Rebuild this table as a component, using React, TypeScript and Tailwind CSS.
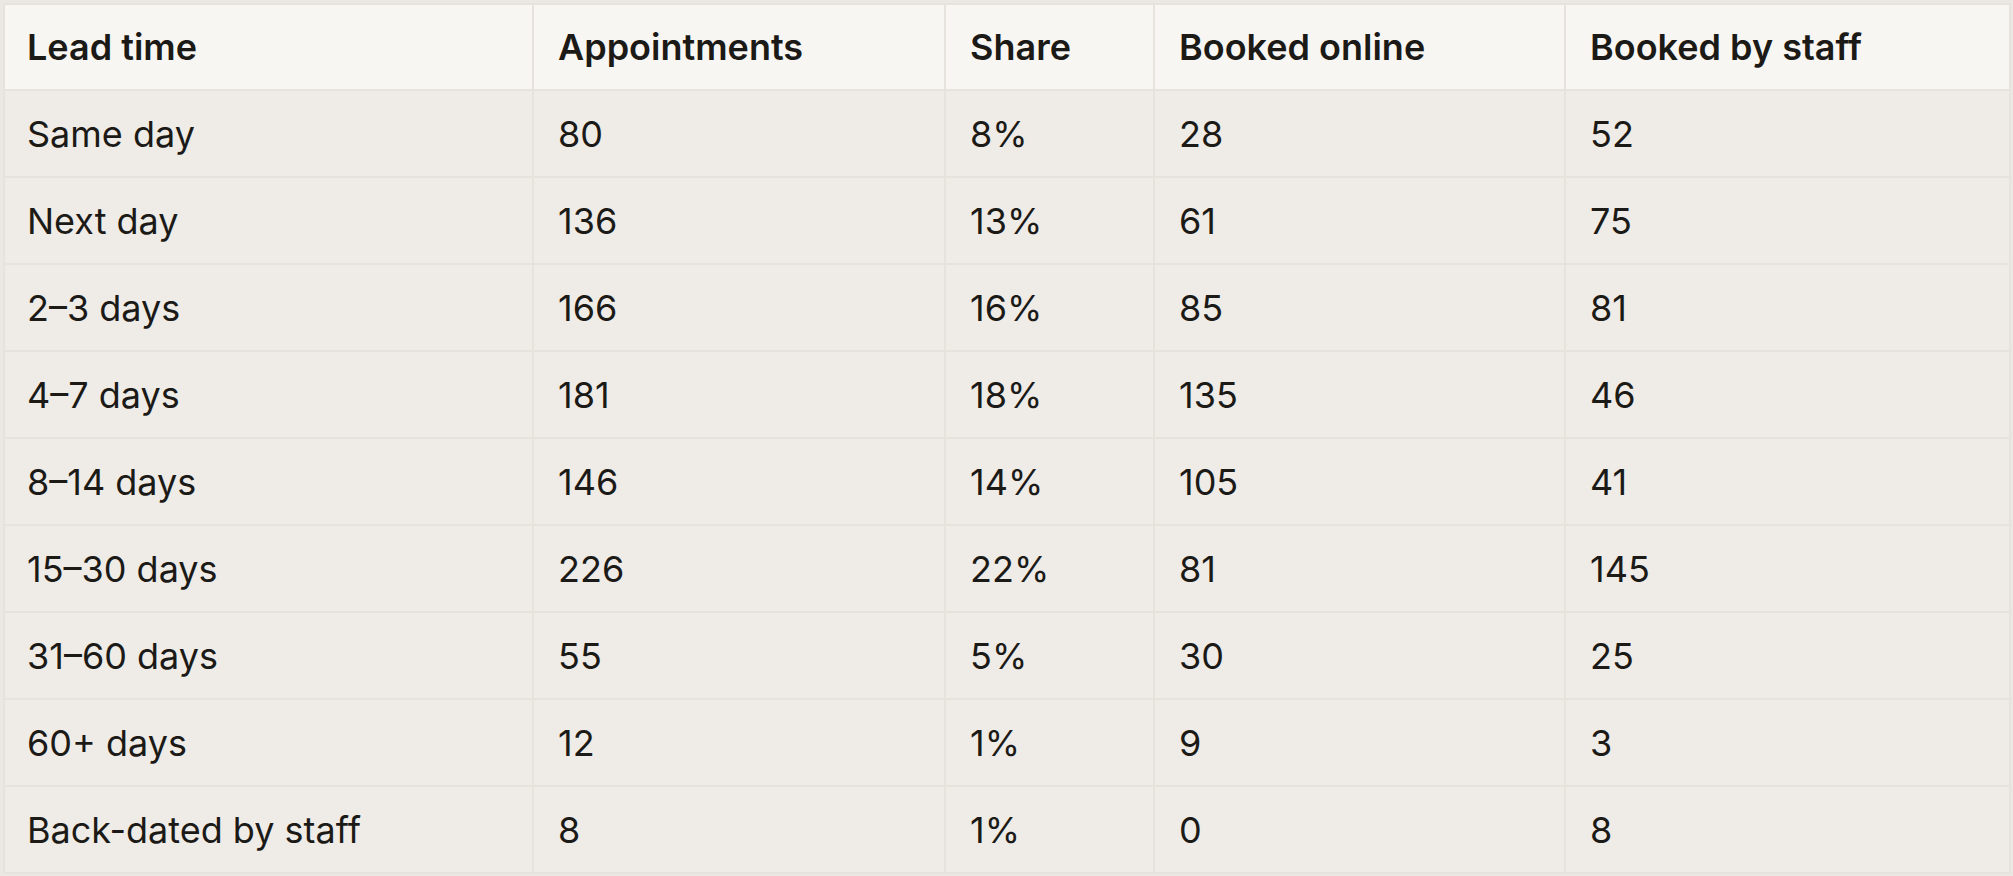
import React from 'react';

const rows: [string, string, string, string, string][] = [
  ['Same day', '80', '8%', '28', '52'],
  ['Next day', '136', '13%', '61', '75'],
  ['2–3 days', '166', '16%', '85', '81'],
  ['4–7 days', '181', '18%', '135', '46'],
  ['8–14 days', '146', '14%', '105', '41'],
  ['15–30 days', '226', '22%', '81', '145'],
  ['31–60 days', '55', '5%', '30', '25'],
  ['60+ days', '12', '1%', '9', '3'],
  ['Back-dated by staff', '8', '1%', '0', '8'],
];

const headers = ['Lead time', 'Appointments', 'Share', 'Booked online', 'Booked by staff'];
const widths = ['w-[529px]', 'w-[412px]', 'w-[209px]', 'w-[411px]', 'w-[445px]'];

export default function App() {
  return (
    <div className="min-h-screen bg-[#ebe8e3] pl-[3px] pt-[3px] font-['Inter','Liberation_Sans',sans-serif] text-[#1c1a17]">
      <table className="table-fixed border-collapse w-[2006px] text-[36px] leading-none">
        <thead>
          <tr className="h-[86px] bg-[#f8f6f2]">
            {headers.map((h, i) => (
              <th
                key={h}
                className={`${widths[i]} border-2 border-[#e6e3dd] ${i === 0 ? 'pl-[22px]' : 'pl-[24px]'} pr-[24px] text-left font-semibold`}
              >
                {h}
              </th>
            ))}
          </tr>
        </thead>
        <tbody>
          {rows.map((r) => (
            <tr key={r[0]} className="h-[87px] bg-[#efece7]">
              {r.map((c, i) => (
                <td
                  key={i}
                  className={`border-2 border-[#e6e3dd] ${i === 0 ? 'pl-[22px]' : 'pl-[24px]'} pr-[24px] font-normal`}
                >
                  {c}
                </td>
              ))}
            </tr>
          ))}
        </tbody>
      </table>
    </div>
  );
}
